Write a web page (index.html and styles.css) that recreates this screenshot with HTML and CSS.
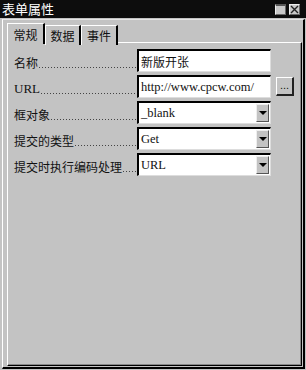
FILE: index.html
```html
<!DOCTYPE html>
<html lang="zh">
<head>
	<meta charset="UTF-8">
	<title>表单属性</title>
	<link rel="stylesheet" href="styles.css">
</head>
<body>
	<div class="titlebar">
		<span class="title">表单属性</span>
		<div class="buttons">
			<span class="btn max"></span>
			<span class="btn close">
				<svg width="9" height="9" viewBox="0 0 9 9"><path d="M1 1L8 8M8 1L1 8" stroke="#222" stroke-width="1.4"/></svg>
			</span>
		</div>
	</div>
	<div class="frame">
		<div class="tabs">
			<div class="tab active">常规</div>
			<div class="tab">数据</div>
			<div class="tab">事件</div>
		</div>
		<div class="panel">
			<div class="row">
				<div class="lbl"><span>名称</span><span class="dots"></span></div>
				<div class="field"><span>新版开张</span></div>
			</div>
			<div class="row">
				<div class="lbl"><span class="serif">URL</span><span class="dots"></span></div>
				<div class="field"><span class="serif">http://www.cpcw.com/</span></div>
				<div class="browse">...</div>
			</div>
			<div class="row">
				<div class="lbl"><span>框对象</span><span class="dots"></span></div>
				<div class="field select"><span class="serif">_blank</span><span class="drop"></span></div>
			</div>
			<div class="row">
				<div class="lbl"><span>提交的类型</span><span class="dots"></span></div>
				<div class="field select"><span class="serif">Get</span><span class="drop"></span></div>
			</div>
			<div class="row">
				<div class="lbl"><span>提交时执行编码处理</span><span class="dots"></span></div>
				<div class="field select"><span class="serif">URL</span><span class="drop"></span></div>
			</div>
		</div>
	</div>
</body>
</html>
```

FILE: styles.css
```css
*{
  padding: 0;
  margin: 0;
  box-sizing: border-box;
}

body{
  width: 306px;
  height: 370px;
  background: #c3c3c3;
  font-family: "Noto Sans CJK SC", "Liberation Sans", sans-serif;
  font-size: 12px;
  color: #111;
  overflow: hidden;
}

.titlebar{
  height: 18px;
  background: #0d0d0d;
  color: #fff;
  display: flex;
  align-items: center;
  justify-content: space-between;
  padding: 0 6px 0 2px;
}

.title{
  font-size: 13px;
  line-height: 18px;
}

.buttons{
  display: flex;
  gap: 3px;
}

.btn{
  width: 11px;
  height: 11px;
  background: #c8c8c8;
  border: 1px solid #eee;
  border-right-color: #666;
  border-bottom-color: #666;
  display: flex;
  align-items: center;
  justify-content: center;
}

.btn.max{
  border-top: 2px solid #555;
}

.frame{
  margin: 1px 1px 0 2px;
  height: 350px;
  border-top: 1px solid #e6e6e6;
  border-left: 1px solid #fff;
  border-right: 2px solid #000;
  border-bottom: 2px solid #000;
  padding: 3px 1px 1px 4px;
  display: flex;
  flex-direction: column;
}

.tabs{
  display: flex;
  height: 20px;
  margin-bottom: -1px;
  position: relative;
  z-index: 1;
}

.tab{
  width: 36px;
  height: 20px;
  border-top: 1px solid #fff;
  border-left: 1px solid #fff;
  border-right: 2px solid #000;
  text-align: center;
  line-height: 19px;
  font-size: 12px;
  background: #c3c3c3;
  margin-top: 2px;
}

.tab.active{
  width: 38px;
  margin-top: 0;
  height: 21px;
  line-height: 22px;
}

.tab:nth-child(3){
  width: 37px;
}

.panel{
  flex: 1;
  border-top: 1px solid #fff;
  border-left: 1px solid #fff;
  border-right: 1px solid #000;
  border-bottom: 1px solid #000;
  box-shadow: inset -1px -1px 0 #888;
  padding: 6px 0 0 6px;
  display: flex;
  flex-direction: column;
  gap: 3px;
}

.row{
  display: flex;
  align-items: flex-end;
  height: 23px;
}

.lbl{
  width: 123px;
  height: 23px;
  display: flex;
  align-items: flex-end;
  white-space: nowrap;
  line-height: 18px;
}

.dots{
  flex: 1;
  height: 1px;
  margin: 0 1px 4px 1px;
  background-image: linear-gradient(to right, #444 1px, transparent 1px);
  background-size: 3px 1px;
}

.serif{
  font-family: "Liberation Serif", serif;
  font-size: 13px;
}

.field{
  width: 134px;
  height: 23px;
  background: #fff;
  border-top: 2px solid #000;
  border-left: 2px solid #000;
  border-right: 1px solid #ddd;
  border-bottom: 1px solid #ddd;
  display: flex;
  align-items: center;
  padding-left: 2px;
  white-space: nowrap;
  overflow: hidden;
}

.field .serif{
  font-size: 12.5px;
}

.select{
  justify-content: space-between;
  padding-right: 1px;
}

.drop{
  width: 13px;
  height: 18px;
  background: #c3c3c3;
  border: 1px solid #eee;
  border-right-color: #555;
  border-bottom-color: #555;
  display: flex;
  align-items: center;
  justify-content: center;
}

.drop::after{
  content: "";
  border-left: 4px solid transparent;
  border-right: 4px solid transparent;
  border-top: 4px solid #000;
}

.browse{
  width: 18px;
  height: 19px;
  margin: 0 0 2px 5px;
  background: #c3c3c3;
  border: 1px solid #fff;
  border-right: 2px solid #222;
  border-bottom: 2px solid #222;
  text-align: center;
  line-height: 14px;
  font-size: 11px;
  font-family: "Liberation Sans", sans-serif;
}
```
